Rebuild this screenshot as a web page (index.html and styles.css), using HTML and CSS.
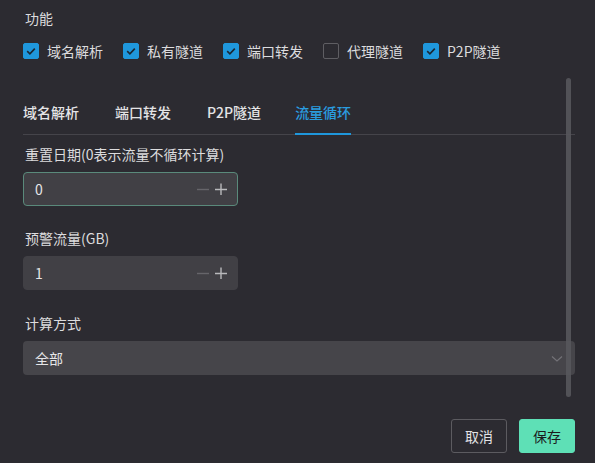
FILE: index.html
```html
<!DOCTYPE html>
<html lang="zh-CN">
<head>
<meta charset="utf-8">
<link rel="stylesheet" href="styles.css">
</head>
<body>
<div class="page">
  <div class="title">功能</div>
  <div class="checks">
    <label class="check"><span class="box on"><svg viewBox="0 0 16 16" width="16" height="16"><path d="M4.2 8.2 L6.9 10.8 L11.8 5.6" fill="none" stroke="#1a2733" stroke-width="1.6"/></svg></span>域名解析</label>
    <label class="check"><span class="box on"><svg viewBox="0 0 16 16" width="16" height="16"><path d="M4.2 8.2 L6.9 10.8 L11.8 5.6" fill="none" stroke="#1a2733" stroke-width="1.6"/></svg></span>私有隧道</label>
    <label class="check"><span class="box on"><svg viewBox="0 0 16 16" width="16" height="16"><path d="M4.2 8.2 L6.9 10.8 L11.8 5.6" fill="none" stroke="#1a2733" stroke-width="1.6"/></svg></span>端口转发</label>
    <label class="check"><span class="box"></span>代理隧道</label>
    <label class="check"><span class="box on"><svg viewBox="0 0 16 16" width="16" height="16"><path d="M4.2 8.2 L6.9 10.8 L11.8 5.6" fill="none" stroke="#1a2733" stroke-width="1.6"/></svg></span>P2P隧道</label>
  </div>
  <div class="tabs">
    <div class="tab">域名解析</div>
    <div class="tab">端口转发</div>
    <div class="tab">P2P隧道</div>
    <div class="tab active">流量循环</div>
  </div>
  <div class="item">
    <div class="label">重置日期(0表示流量不循环计算)</div>
    <div class="num focus">
      <span class="val">0</span>
      <span class="ctrls">
        <svg width="12" height="12" viewBox="0 0 12 12"><path d="M0 6.5H12" stroke="#66656a" stroke-width="1.4"/></svg>
        <svg width="12" height="12" viewBox="0 0 12 12"><path d="M0 6.5H12M6 0.5V12.5" stroke="#b9b9bc" stroke-width="1.4"/></svg>
      </span>
    </div>
  </div>
  <div class="item">
    <div class="label">预警流量(GB)</div>
    <div class="num">
      <span class="val">1</span>
      <span class="ctrls">
        <svg width="12" height="12" viewBox="0 0 12 12"><path d="M0 6.5H12" stroke="#66656a" stroke-width="1.4"/></svg>
        <svg width="12" height="12" viewBox="0 0 12 12"><path d="M0 6.5H12M6 0.5V12.5" stroke="#b9b9bc" stroke-width="1.4"/></svg>
      </span>
    </div>
  </div>
  <div class="item last">
    <div class="label">计算方式</div>
    <div class="select">
      <span class="val">全部</span>
      <svg width="12" height="8" viewBox="0 0 12 8"><path d="M1 1.5 L6 6 L11 1.5" fill="none" stroke="#737277" stroke-width="1.2"/></svg>
    </div>
  </div>
  <div class="footer">
    <button class="btn cancel">取消</button>
    <button class="btn save">保存</button>
  </div>
  <div class="scrollbar"></div>
</div>
</body>
</html>
```
FILE: styles.css
```css
* { box-sizing: border-box; }
html, body { margin: 0; padding: 0; }
body {
  background: #2c2b31;
  color: #dcdcde;
  font-family: "Noto Sans CJK SC", "Noto Sans", sans-serif;
  font-size: 14px;
  width: 595px;
  height: 463px;
  overflow: hidden;
}
.page {
  position: relative;
  padding: 7px 20px 0 23px;
}
.title {
  line-height: 22px;
  padding-left: 2px;
}
.checks {
  display: flex;
  margin-top: 11px;
  height: 22px;
}
.check {
  width: 100px;
  display: flex;
  align-items: center;
  gap: 8px;
  line-height: 22px;
}
.box {
  width: 16px;
  height: 16px;
  border-radius: 2px;
  border: 1px solid #5f5e63;
  display: block;
}
.box.on {
  background: #1f97dc;
  border-color: #1f97dc;
}
.box svg { display: block; margin: -1px; }
.tabs {
  display: flex;
  gap: 36px;
  margin-top: 28px;
  border-bottom: 1px solid #45444a;
}
.tab {
  position: relative;
  line-height: 44px;
  height: 44px;
  color: #e4e4e6;
  font-weight: 500;
}
.tab:nth-child(3) { margin-right: -2px; }
.tab.active { color: #2a9de0; }
.tab.active::after {
  content: "";
  position: absolute;
  left: 0;
  right: 0;
  bottom: -1px;
  height: 2px;
  background: #1f97dc;
}
.item {
  margin-top: 8px;
  margin-bottom: 13px;
}
.item + .item { margin-top: 21px; }
.item.last { margin-top: 22px; }
.label {
  line-height: 22px;
  padding-left: 2px;
  margin-bottom: 7px;
}
.num {
  width: 215px;
  height: 34px;
  background: #414045;
  border: 1px solid #414045;
  border-radius: 4px;
  display: flex;
  align-items: center;
  justify-content: space-between;
  padding: 0 10px 0 11px;
}
.num.focus { border-color: #5a8a7b; }
.val { color: #e6e6e8; }
.ctrls {
  display: flex;
  gap: 6px;
}
.ctrls svg { display: block; }
.select {
  width: 552px;
  height: 34px;
  background: #46454a;
  border-radius: 4px;
  display: flex;
  align-items: center;
  justify-content: space-between;
  padding: 0 12px 0 12px;
}
.select svg { display: block; margin-top: 2px; }
.footer {
  display: flex;
  justify-content: flex-end;
  gap: 12px;
  margin-top: 44px;
  width: 552px;
}
.btn {
  width: 56px;
  height: 34px;
  border-radius: 3px;
  font-family: inherit;
  font-size: 14px;
  padding: 0;
}
.cancel {
  background: transparent;
  border: 1px solid #5c5b60;
  color: #e2e2e4;
}
.save {
  background: #5ee0b6;
  border: 1px solid #5ee0b6;
  color: #1b1b1d;
}
.scrollbar {
  position: absolute;
  left: 566px;
  top: 78px;
  width: 5px;
  height: 319px;
  border-radius: 3px;
  background: #57565c;
  opacity: 0.9;
}
```
